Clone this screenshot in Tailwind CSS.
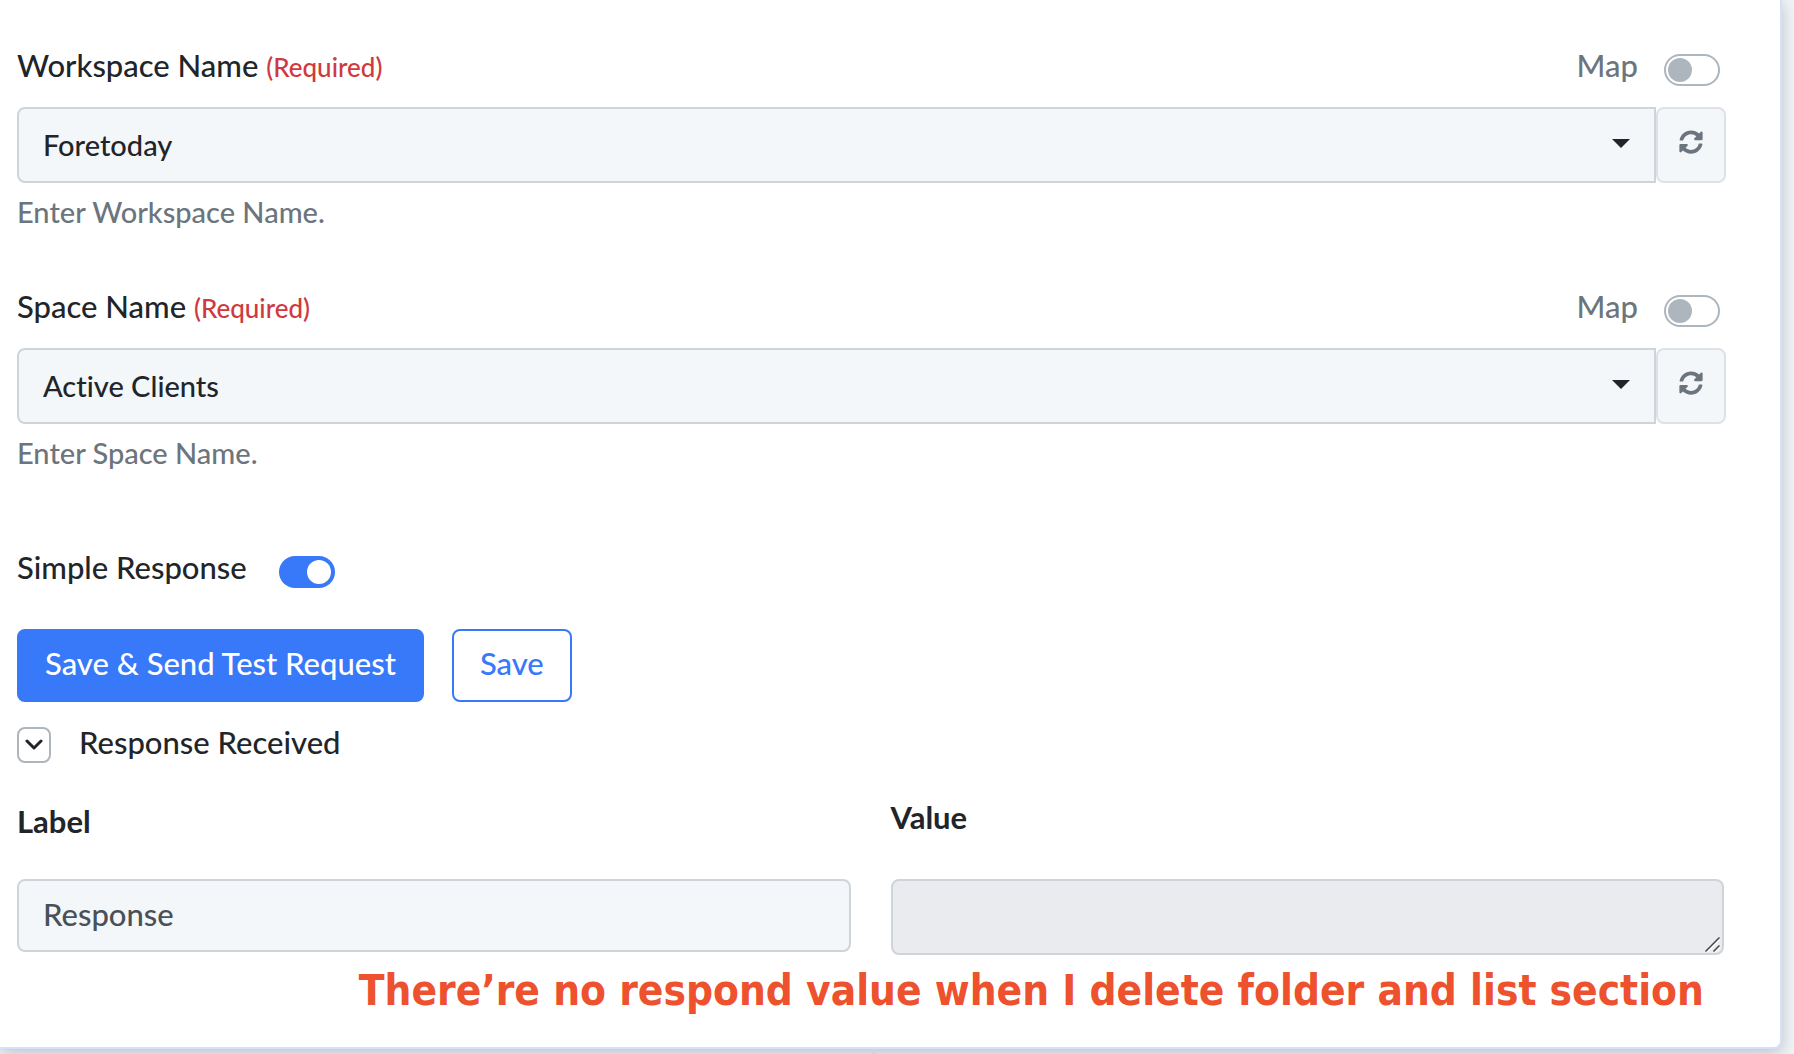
<!DOCTYPE html>
<html lang="en">
<head>
<meta charset="utf-8">
<title>Action setup</title>
<script src="https://cdn.jsdelivr.net/npm/@tailwindcss/browser@4"></script>
</head>
<body class="bg-[#f0f4f8] font-['Lato',sans-serif] [font-variant-ligatures:none] font-medium text-[#212529] text-[31px] leading-10 overflow-x-hidden">
<div class="pr-3">
<main class="bg-white border-r-2 border-b-2 border-[#d6e0fc] rounded-br-lg shadow-[0_4px_16px_rgba(40,45,50,0.25)] pl-[17px] pr-[54px] pt-[46px] pb-7">

  <section class="mb-[58px]">
    <div class="flex justify-between h-[61px]">
      <label for="workspace" class="-mt-px">Workspace Name <span class="text-[26px] text-[#cf3a40]">(Required)</span></label>
      <label class="flex gap-[26px] pr-[6px] text-[#6c757d]"><span class="-mt-px">Map</span>
        <span class="relative mt-2 h-8 w-14"><input type="checkbox" class="appearance-none block h-8 w-14 rounded-full border-2 border-[#adb5bd] bg-white"><span class="absolute left-1 top-1 size-6 rounded-full bg-[#adb5bd]"></span></span>
      </label>
    </div>
    <div class="flex h-[76px]">
      <div class="relative flex-1">
        <select id="workspace" class="appearance-none block w-full h-full rounded-l-lg border-2 border-[#ced4da] bg-[#f3f7fa] px-6 text-[29px]"><option>Foretoday</option></select>
        <svg class="absolute right-[26px] top-8 pointer-events-none" width="18" height="9" viewBox="0 0 18 9"><path d="M0 0H18L9 9Z" fill="#212529"/></svg>
      </div>
      <button type="button" aria-label="Refresh workspaces" class="w-[70px] rounded-lg border-2 border-[#dee2e6] bg-[#f3f7fa] flex justify-center pt-[21px]">
        <svg width="24" height="24" viewBox="0 0 512 512" fill="#6c757d"><path d="M370.72 133.28C339.458 104.008 298.888 87.962 255.848 88c-77.458.068-144.328 53.178-162.791 126.85-1.344 5.363-6.122 9.15-11.651 9.15H24.103c-7.498 0-13.194-6.807-11.807-14.176C33.933 94.924 134.813 8 256 8c66.448 0 126.791 26.136 171.315 68.685L463.03 40.97C478.149 25.851 504 36.559 504 57.941V192c0 13.255-10.745 24-24 24H345.941c-21.382 0-32.09-25.851-16.971-40.971l41.75-41.749zM32 296h134.059c21.382 0 32.09 25.851 16.971 40.971l-41.75 41.75c31.262 29.273 71.835 45.319 114.876 45.28 77.418-.07 144.315-53.144 162.787-126.849 1.344-5.363 6.122-9.15 11.651-9.15h57.304c7.498 0 13.194 6.807 11.807 14.176C478.067 417.076 377.187 504 256 504c-66.448 0-126.791-26.136-171.315-68.685L48.97 471.03C33.851 486.149 8 475.441 8 454.059V320c0-13.255 10.745-24 24-24z"/></svg>
      </button>
    </div>
    <p class="mt-2 pt-[3px] text-[29px] leading-[35px] text-[#6c757d]">Enter Workspace Name.</p>
  </section>

  <section class="mb-[60px]">
    <div class="flex justify-between h-[61px]">
      <label for="space" class="-mt-px">Space Name <span class="text-[26px] text-[#cf3a40]">(Required)</span></label>
      <label class="flex gap-[26px] pr-[6px] text-[#6c757d]"><span class="-mt-px">Map</span>
        <span class="relative mt-2 h-8 w-14"><input type="checkbox" class="appearance-none block h-8 w-14 rounded-full border-2 border-[#adb5bd] bg-white"><span class="absolute left-1 top-1 size-6 rounded-full bg-[#adb5bd]"></span></span>
      </label>
    </div>
    <div class="flex h-[76px]">
      <div class="relative flex-1">
        <select id="space" class="appearance-none block w-full h-full rounded-l-lg border-2 border-[#ced4da] bg-[#f3f7fa] px-6 text-[29px]"><option>Active Clients</option></select>
        <svg class="absolute right-[26px] top-8 pointer-events-none" width="18" height="9" viewBox="0 0 18 9"><path d="M0 0H18L9 9Z" fill="#212529"/></svg>
      </div>
      <button type="button" aria-label="Refresh spaces" class="w-[70px] rounded-lg border-2 border-[#dee2e6] bg-[#f3f7fa] flex justify-center pt-[21px]">
        <svg width="24" height="24" viewBox="0 0 512 512" fill="#6c757d"><path d="M370.72 133.28C339.458 104.008 298.888 87.962 255.848 88c-77.458.068-144.328 53.178-162.791 126.85-1.344 5.363-6.122 9.15-11.651 9.15H24.103c-7.498 0-13.194-6.807-11.807-14.176C33.933 94.924 134.813 8 256 8c66.448 0 126.791 26.136 171.315 68.685L463.03 40.97C478.149 25.851 504 36.559 504 57.941V192c0 13.255-10.745 24-24 24H345.941c-21.382 0-32.09-25.851-16.971-40.971l41.75-41.749zM32 296h134.059c21.382 0 32.09 25.851 16.971 40.971l-41.75 41.75c31.262 29.273 71.835 45.319 114.876 45.28 77.418-.07 144.315-53.144 162.787-126.849 1.344-5.363 6.122-9.15 11.651-9.15h57.304c7.498 0 13.194 6.807 11.807 14.176C478.067 417.076 377.187 504 256 504c-66.448 0-126.791-26.136-171.315-68.685L48.97 471.03C33.851 486.149 8 475.441 8 454.059V320c0-13.255 10.745-24 24-24z"/></svg>
      </button>
    </div>
    <p class="mt-2 pt-[3px] text-[29px] leading-[35px] text-[#6c757d]">Enter Space Name.</p>
  </section>

  <label class="flex w-fit gap-8 pt-[18px] mb-[41px]"><span class="-mt-px">Simple Response</span>
    <span class="relative mt-2 h-8 w-14"><input type="checkbox" checked class="appearance-none block h-8 w-14 rounded-full bg-[#3779f8]"><span class="absolute right-1 top-1 size-6 rounded-full bg-white"></span></span>
  </label>

  <div class="flex gap-7 mb-6">
    <button type="button" class="h-[73px] rounded-lg border-2 border-[#3779f8] bg-[#3779f8] px-[26px] pb-[6px] text-white">Save &amp; Send Test Request</button>
    <button type="button" class="h-[73px] rounded-lg border-2 border-[#3779f8] bg-white px-[26px] pb-[6px] text-[#3779f8]">Save</button>
  </div>

  <div class="flex gap-7 mb-[34px]">
    <button type="button" aria-label="Toggle response" class="mt-px flex h-9 w-[34px] items-center justify-center rounded-lg border-2 border-[#adb5bd]">
      <svg width="18" height="12" viewBox="0 0 18 12" fill="none" stroke="#212529" stroke-width="3" stroke-linecap="round" stroke-linejoin="round"><path d="M2 2L9 9L16 2"/></svg>
    </button>
    <h2 class="-mt-1">Response Received</h2>
  </div>

  <div class="grid grid-cols-2 gap-10 pr-[2px] font-bold">
    <div><label for="resp-label" class="block h-[82px] pt-1">Label</label>
      <input id="resp-label" type="text" value="Response" class="block w-full h-[73px] rounded-lg border-2 border-[#ced4da] bg-[#f3f7fa] px-6 pb-1 font-medium text-[#495057]"></div>
    <div><label for="resp-value" class="block h-[82px]">Value</label>
      <div class="relative"><textarea id="resp-value" readonly class="block w-full h-[76px] rounded-lg border-2 border-[#ced4da] bg-[#e9ebef] px-6 font-medium resize-none"></textarea>
      <svg class="absolute right-1 bottom-[3px] pointer-events-none" width="15" height="15" viewBox="0 0 15 15" fill="none" stroke-width="1.5"><path d="M2 15L15 2M10 15L15 10" stroke="#fff"/><path d="M.5 14.5L14.5 .5M8.500 14.500L14.500 8.500" stroke="#444"/></svg></div></div>
  </div>

  <p class="pt-2 pr-[22px] text-right whitespace-nowrap font-['DejaVu_Sans_Condensed','DejaVu_Sans',sans-serif] font-bold text-[42px] leading-[56px] text-[#ed512e]">There’re no respond value when I delete folder and list section</p>
</main>
<div class="relative ml-[872px] h-[5px] w-1 bg-[#cfd4da]"></div>
</div>
</body>
</html>
